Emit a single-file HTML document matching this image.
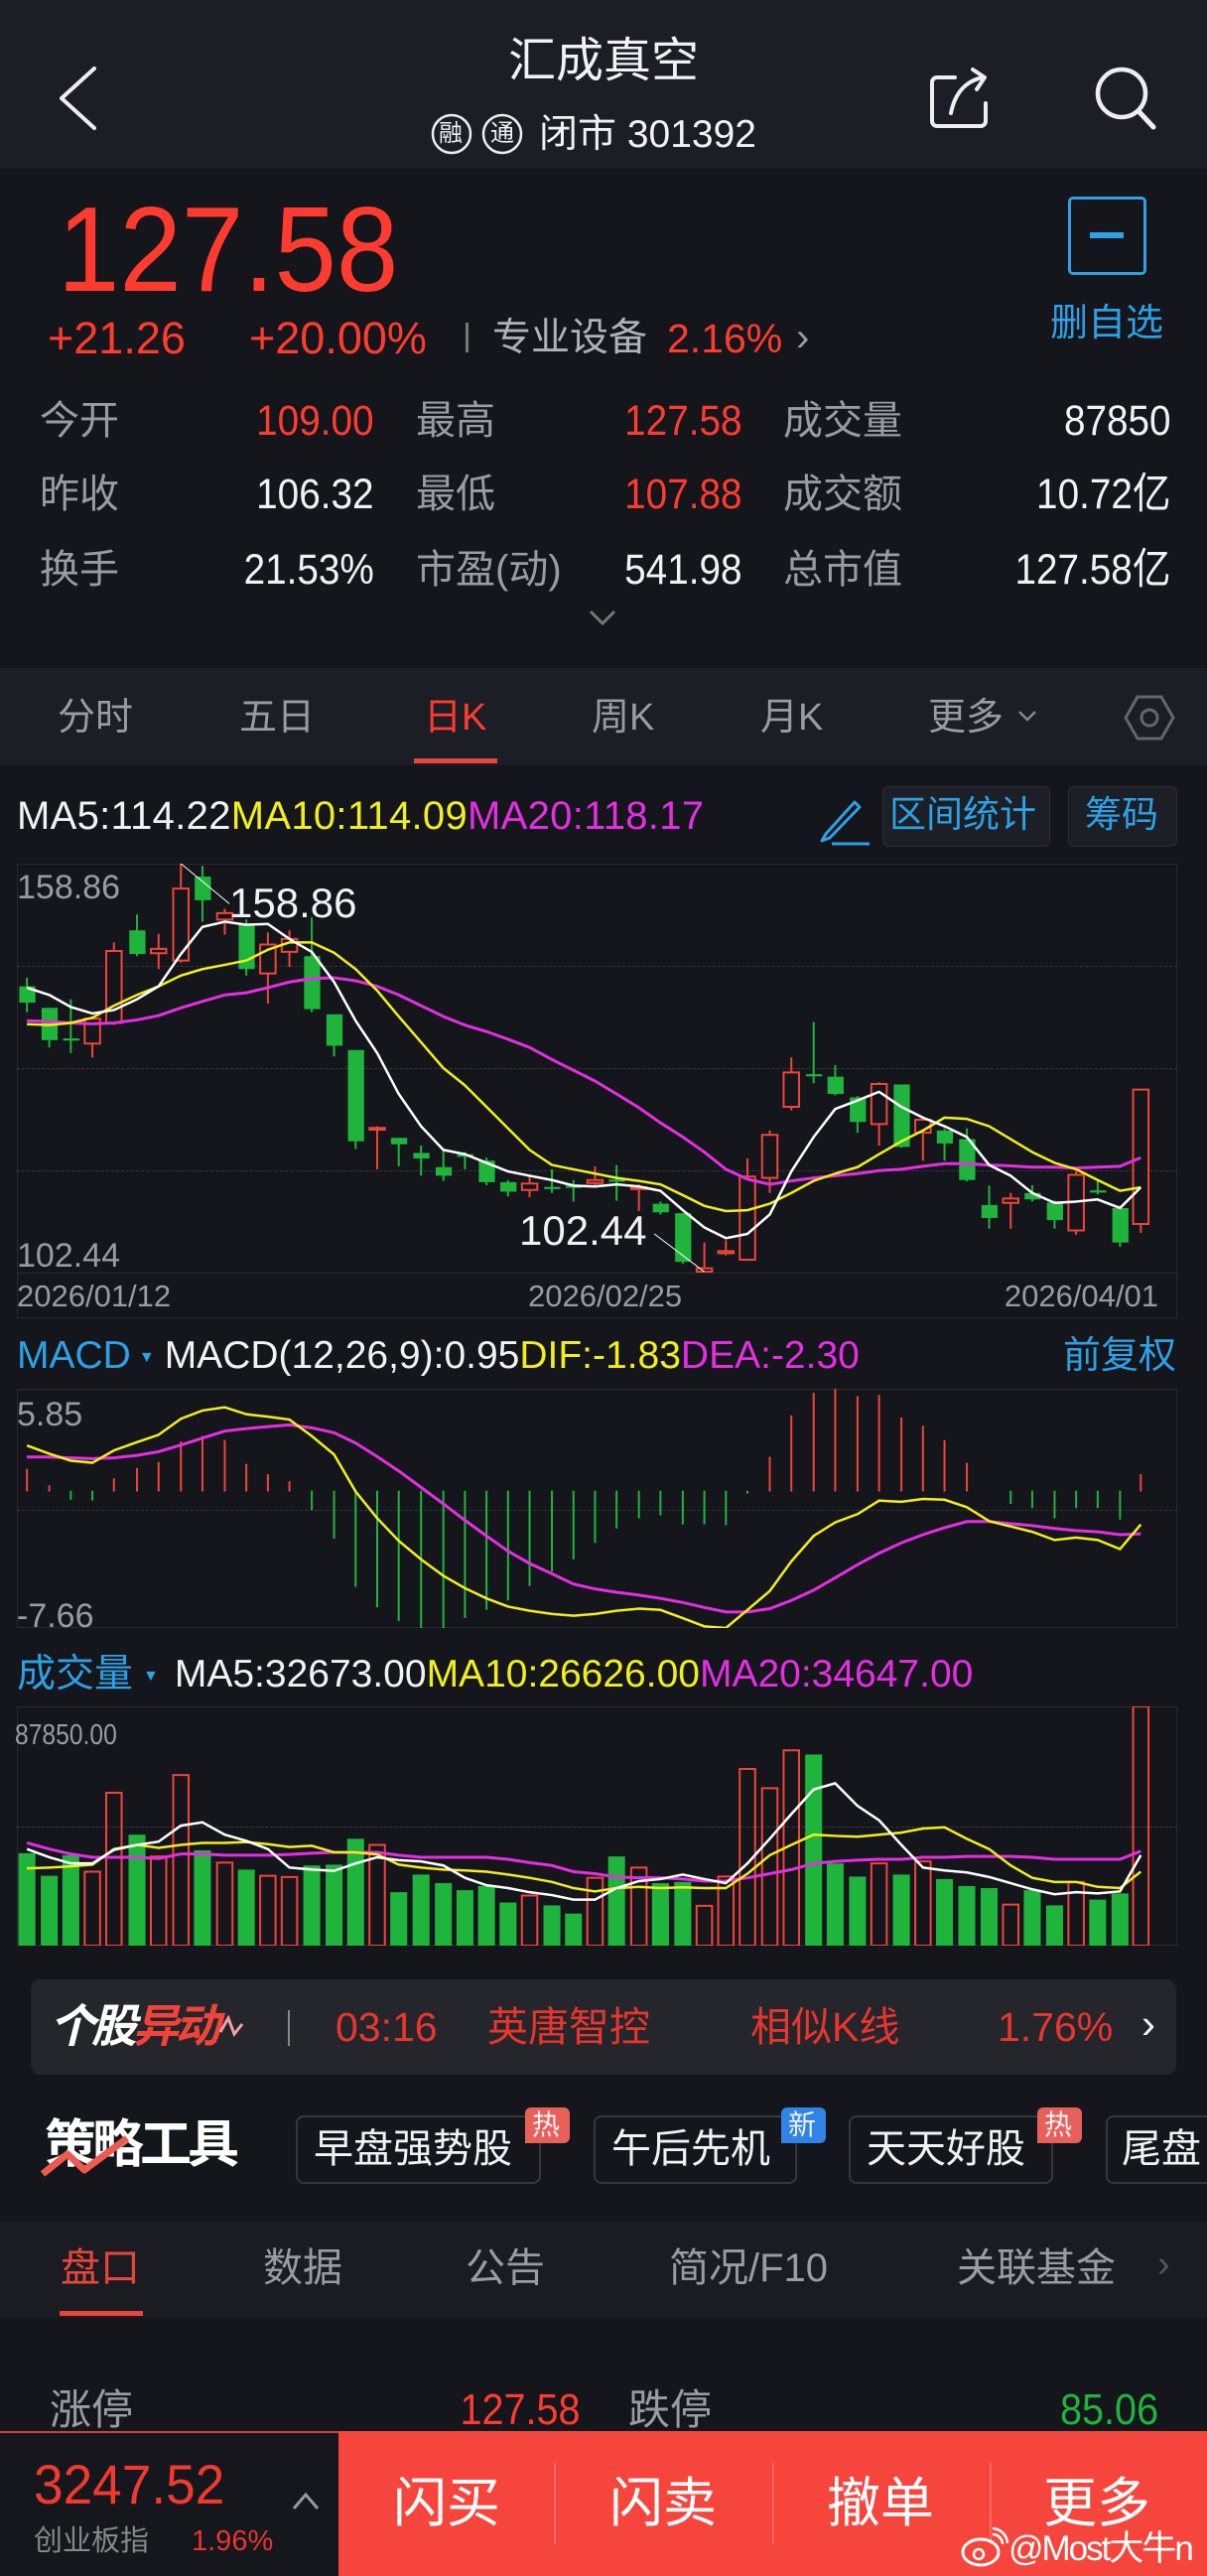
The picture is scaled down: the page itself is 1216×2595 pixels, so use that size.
<!DOCTYPE html>
<html><head><meta charset="utf-8">
<style>
*{margin:0;padding:0;box-sizing:border-box}
body{width:1216px;height:2595px;background:#14161b;position:relative;overflow:hidden;font-family:"Liberation Sans","Noto Sans CJK SC",sans-serif;color:#e8e8ea}
.t{position:absolute;white-space:nowrap;line-height:1.2}
.r{color:#ff3b30}.g{color:#1fb43c}.gy{color:#9a9ca3}.b{color:#2ea0e6}.w{color:#f2f2f4}.y{color:#f2ee1e}.m{color:#e52ee2}
.sx{display:inline-block;transform-origin:left center}
.sxr{display:inline-block;transform-origin:right center}
.rt{text-align:right}
svg{position:absolute}
</style></head><body>
<!-- header -->
<div style="position:absolute;left:0;top:0;width:1216px;height:170px;background:#1b1e25"></div>
<svg style="left:0;top:0" width="1216" height="170">
<polyline points="95,69 62,99 95,129" fill="none" stroke="#eee" stroke-width="4" stroke-linecap="round" stroke-linejoin="round"/>
<path d="M962,78 H944 a5,5 0 0 0 -5,5 V122 a5,5 0 0 0 5,5 H988 a5,5 0 0 0 5,-5 V104" fill="none" stroke="#eee" stroke-width="4" stroke-linecap="round"/>
<path d="M958,114 C962,94 972,82 990,78 M980,70 L992,78 L984,90" fill="none" stroke="#eee" stroke-width="4" stroke-linecap="round" stroke-linejoin="round"/>
<circle cx="1130" cy="94" r="24" fill="none" stroke="#eee" stroke-width="4.5"/>
<line x1="1147" y1="112" x2="1162" y2="128" stroke="#eee" stroke-width="5" stroke-linecap="round"/>
<circle cx="455" cy="135" r="19" fill="none" stroke="#eee" stroke-width="2.5"/>
<circle cx="506" cy="135" r="19" fill="none" stroke="#eee" stroke-width="2.5"/>
</svg>
<div class="t w" style="left:0;width:1216px;text-align:center;top:33px;font-size:48px">汇成真空</div>
<div class="t w" style="left:442px;top:121px;font-size:24px">融</div>
<div class="t w" style="left:494px;top:121px;font-size:24px">通</div>
<div class="t w" style="left:543px;top:113px;font-size:39px">闭市 301392</div>

<!-- price -->
<div class="t r" style="left:58px;top:190px;font-size:122px;line-height:1"><span class="sx" style="transform:scaleX(.92)">127.58</span></div>
<div class="t r" style="left:48px;top:318px;font-size:45px;line-height:1">+21.26</div>
<div class="t r" style="left:251px;top:318px;font-size:45px;line-height:1">+20.00%</div>
<div style="position:absolute;left:469px;top:325px;width:3px;height:30px;background:#777"></div>
<div class="t gy" style="left:496px;top:318px;font-size:39px;color:#b0b2b8">专业设备</div>
<div class="t r" style="left:672px;top:319px;font-size:41px;line-height:1.1">2.16%</div>
<div class="t gy" style="left:802px;top:316px;font-size:40px">›</div>
<div style="position:absolute;left:1076px;top:198px;width:79px;height:79px;border:3px solid #2ea0e6;border-radius:5px"></div>
<div style="position:absolute;left:1098px;top:234px;width:34px;height:6px;background:#2ea0e6"></div>
<div class="t b" style="left:1058px;top:304px;font-size:38px">删自选</div>

<!-- stats -->
<div class="t gy" style="left:40px;top:400px;font-size:40px">今开</div>
<div class="t gy" style="left:40px;top:474px;font-size:40px">昨收</div>
<div class="t gy" style="left:40px;top:550px;font-size:40px">换手</div>
<div class="t gy" style="left:419px;top:400px;font-size:40px">最高</div>
<div class="t gy" style="left:419px;top:474px;font-size:40px">最低</div>
<div class="t gy" style="left:419px;top:550px;font-size:40px">市盈(动)</div>
<div class="t gy" style="left:789px;top:400px;font-size:40px">成交量</div>
<div class="t gy" style="left:789px;top:474px;font-size:40px">成交额</div>
<div class="t gy" style="left:789px;top:550px;font-size:40px">总市值</div>
<div class="t r rt" style="right:839px;top:399px;font-size:43px"><span class="sxr" style="transform:scaleX(.9)">109.00</span></div>
<div class="t w rt" style="right:839px;top:473px;font-size:43px"><span class="sxr" style="transform:scaleX(.9)">106.32</span></div>
<div class="t w rt" style="right:839px;top:549px;font-size:43px"><span class="sxr" style="transform:scaleX(.9)">21.53%</span></div>
<div class="t r rt" style="right:468px;top:399px;font-size:43px"><span class="sxr" style="transform:scaleX(.9)">127.58</span></div>
<div class="t r rt" style="right:468px;top:473px;font-size:43px"><span class="sxr" style="transform:scaleX(.9)">107.88</span></div>
<div class="t w rt" style="right:468px;top:549px;font-size:43px"><span class="sxr" style="transform:scaleX(.9)">541.98</span></div>
<div class="t w rt" style="right:36px;top:399px;font-size:43px"><span class="sxr" style="transform:scaleX(.9)">87850</span></div>
<div class="t w rt" style="right:36px;top:473px;font-size:43px"><span class="sxr" style="transform:scaleX(.9)">10.72亿</span></div>
<div class="t w rt" style="right:36px;top:549px;font-size:43px"><span class="sxr" style="transform:scaleX(.9)">127.58亿</span></div>
<svg style="left:0;top:600px" width="1216" height="40"><polyline points="595,16 607,28 619,16" fill="none" stroke="#777" stroke-width="3"/></svg>

<!-- tabs -->
<div style="position:absolute;left:0;top:673px;width:1216px;height:98px;background:#1b1e24"></div>
<div class="t gy" style="left:58px;top:701px;font-size:38px">分时</div>
<div class="t gy" style="left:241px;top:701px;font-size:38px">五日</div>
<div class="t r" style="left:427px;top:701px;font-size:38px">日K</div>
<div class="t gy" style="left:596px;top:701px;font-size:38px">周K</div>
<div class="t gy" style="left:766px;top:701px;font-size:38px">月K</div>
<div class="t gy" style="left:935px;top:701px;font-size:38px">更多</div>
<div style="position:absolute;left:417px;top:764px;width:84px;height:5px;background:#e8453c"></div>
<svg style="left:0;top:673px" width="1216" height="98">
<polyline points="1027,44 1035,52 1043,44" fill="none" stroke="#888" stroke-width="2.5"/>
<polygon points="1146,29 1170,29 1182,50 1170,71 1146,71 1134,50" fill="none" stroke="#666" stroke-width="3"/>
<circle cx="1158" cy="50" r="8" fill="none" stroke="#666" stroke-width="3"/>
</svg>

<!-- MA row -->
<div class="t" style="left:17px;top:798px;font-size:40px;letter-spacing:0.3px"><span class="w">MA5:114.22</span><span class="y">MA10:114.09</span><span class="m">MA20:118.17</span></div>
<svg style="left:820px;top:795px" width="60" height="60"><path d="M12,45 L8,52 L16,49 L46,18 L41,13 Z" fill="none" stroke="#2ea0e6" stroke-width="3" stroke-linejoin="round"/><line x1="18" y1="55" x2="56" y2="55" stroke="#2ea0e6" stroke-width="3"/></svg>
<div style="position:absolute;left:889px;top:792px;width:169px;height:61px;background:#1c1f25;border:1px solid #2a2d33;border-radius:6px"></div>
<div class="t b" style="left:896px;top:799px;font-size:37px">区间统计</div>
<div style="position:absolute;left:1076px;top:792px;width:110px;height:61px;background:#1c1f25;border:1px solid #2a2d33;border-radius:6px"></div>
<div class="t b" style="left:1093px;top:799px;font-size:37px">筹码</div>

<!-- price chart -->
<div style="position:absolute;left:17px;top:870px;width:1169px;height:458px;border:1px solid #272a30"></div>
<div style="position:absolute;left:17px;top:973px;width:1169px;border-top:1px dashed #33363c"></div>
<div style="position:absolute;left:17px;top:1076px;width:1169px;border-top:1px dashed #33363c"></div>
<div style="position:absolute;left:17px;top:1179px;width:1169px;border-top:1px dashed #33363c"></div>
<div style="position:absolute;left:17px;top:1282px;width:1169px;border-top:1px solid #272a30"></div>
<svg style="left:0;top:870px" width="1216" height="412" viewBox="0 485 1568 950" preserveAspectRatio="none">
<g stroke="#1fb43c" stroke-width="2" vector-effect="non-scaling-stroke">
<line x1="35" y1="750" x2="35" y2="830" vector-effect="non-scaling-stroke"/><line x1="64" y1="820" x2="64" y2="912" vector-effect="non-scaling-stroke"/><line x1="92" y1="800" x2="92" y2="925" vector-effect="non-scaling-stroke"/><line x1="178" y1="603" x2="178" y2="700" vector-effect="non-scaling-stroke"/><line x1="263" y1="490" x2="263" y2="620" vector-effect="non-scaling-stroke"/><line x1="320" y1="615" x2="320" y2="745" vector-effect="non-scaling-stroke"/><line x1="405" y1="610" x2="405" y2="830" vector-effect="non-scaling-stroke"/><line x1="434" y1="835" x2="434" y2="933" vector-effect="non-scaling-stroke"/><line x1="462" y1="918" x2="462" y2="1148" vector-effect="non-scaling-stroke"/><line x1="518" y1="1122" x2="518" y2="1188" vector-effect="non-scaling-stroke"/><line x1="547" y1="1140" x2="547" y2="1210" vector-effect="non-scaling-stroke"/><line x1="576" y1="1150" x2="576" y2="1222" vector-effect="non-scaling-stroke"/><line x1="604" y1="1155" x2="604" y2="1195" vector-effect="non-scaling-stroke"/><line x1="632" y1="1168" x2="632" y2="1232" vector-effect="non-scaling-stroke"/><line x1="660" y1="1220" x2="660" y2="1258" vector-effect="non-scaling-stroke"/><line x1="717" y1="1195" x2="717" y2="1250" vector-effect="non-scaling-stroke"/><line x1="745" y1="1220" x2="745" y2="1270" vector-effect="non-scaling-stroke"/><line x1="801" y1="1185" x2="801" y2="1268" vector-effect="non-scaling-stroke"/><line x1="858" y1="1270" x2="858" y2="1300" vector-effect="non-scaling-stroke"/><line x1="887" y1="1297" x2="887" y2="1415" vector-effect="non-scaling-stroke"/><line x1="1057" y1="853" x2="1057" y2="995" vector-effect="non-scaling-stroke"/><line x1="1085" y1="953" x2="1085" y2="1023" vector-effect="non-scaling-stroke"/><line x1="1114" y1="1025" x2="1114" y2="1110" vector-effect="non-scaling-stroke"/><line x1="1171" y1="998" x2="1171" y2="1145" vector-effect="non-scaling-stroke"/><line x1="1227" y1="1100" x2="1227" y2="1175" vector-effect="non-scaling-stroke"/><line x1="1256" y1="1100" x2="1256" y2="1223" vector-effect="non-scaling-stroke"/><line x1="1285" y1="1233" x2="1285" y2="1333" vector-effect="non-scaling-stroke"/><line x1="1341" y1="1232" x2="1341" y2="1270" vector-effect="non-scaling-stroke"/><line x1="1370" y1="1268" x2="1370" y2="1333" vector-effect="non-scaling-stroke"/><line x1="1426" y1="1220" x2="1426" y2="1253" vector-effect="non-scaling-stroke"/><line x1="1455" y1="1280" x2="1455" y2="1375" vector-effect="non-scaling-stroke"/>
</g>
<g fill="#1fb43c">
<rect x="25" y="770" width="21" height="38"/><rect x="54" y="820" width="21" height="75"/><rect x="82" y="891" width="21" height="5"/><rect x="168" y="640" width="21" height="55"/><rect x="253" y="515" width="21" height="55"/><rect x="310" y="625" width="21" height="105"/><rect x="395" y="700" width="21" height="123"/><rect x="424" y="835" width="21" height="73"/><rect x="452" y="918" width="21" height="212"/><rect x="508" y="1122" width="21" height="15"/><rect x="537" y="1157" width="21" height="13"/><rect x="566" y="1190" width="21" height="20"/><rect x="594" y="1160" width="21" height="6"/><rect x="622" y="1175" width="21" height="50"/><rect x="650" y="1225" width="21" height="22"/><rect x="707" y="1236" width="21" height="5"/><rect x="735" y="1233" width="21" height="5"/><rect x="791" y="1219" width="21" height="5"/><rect x="848" y="1275" width="21" height="20"/><rect x="877" y="1297" width="21" height="113"/><rect x="1047" y="974" width="21" height="5"/><rect x="1075" y="980" width="21" height="40"/><rect x="1104" y="1028" width="21" height="57"/><rect x="1161" y="998" width="21" height="145"/><rect x="1217" y="1105" width="21" height="30"/><rect x="1246" y="1125" width="21" height="95"/><rect x="1275" y="1278" width="21" height="30"/><rect x="1331" y="1250" width="21" height="15"/><rect x="1360" y="1272" width="21" height="41"/><rect x="1416" y="1244" width="21" height="5"/><rect x="1445" y="1285" width="21" height="80"/>
</g>
<g stroke="#f0443b" stroke-width="2" fill="#14161b">
<line x1="120" y1="845" x2="120" y2="935" vector-effect="non-scaling-stroke"/><line x1="148" y1="668" x2="148" y2="860" vector-effect="non-scaling-stroke"/><line x1="206" y1="648" x2="206" y2="730" vector-effect="non-scaling-stroke"/><line x1="235" y1="485" x2="235" y2="715" vector-effect="non-scaling-stroke"/><line x1="292" y1="590" x2="292" y2="650" vector-effect="non-scaling-stroke"/><line x1="348" y1="645" x2="348" y2="810" vector-effect="non-scaling-stroke"/><line x1="376" y1="640" x2="376" y2="725" vector-effect="non-scaling-stroke"/><line x1="490" y1="1095" x2="490" y2="1195" vector-effect="non-scaling-stroke"/><line x1="688" y1="1208" x2="688" y2="1260" vector-effect="non-scaling-stroke"/><line x1="773" y1="1188" x2="773" y2="1235" vector-effect="non-scaling-stroke"/><line x1="830" y1="1230" x2="830" y2="1292" vector-effect="non-scaling-stroke"/><line x1="915" y1="1365" x2="915" y2="1435" vector-effect="non-scaling-stroke"/><line x1="943" y1="1360" x2="943" y2="1395" vector-effect="non-scaling-stroke"/><line x1="971" y1="1170" x2="971" y2="1408" vector-effect="non-scaling-stroke"/><line x1="1000" y1="1105" x2="1000" y2="1250" vector-effect="non-scaling-stroke"/><line x1="1028" y1="935" x2="1028" y2="1058" vector-effect="non-scaling-stroke"/><line x1="1142" y1="993" x2="1142" y2="1140" vector-effect="non-scaling-stroke"/><line x1="1199" y1="1072" x2="1199" y2="1175" vector-effect="non-scaling-stroke"/><line x1="1313" y1="1250" x2="1313" y2="1333" vector-effect="non-scaling-stroke"/><line x1="1398" y1="1200" x2="1398" y2="1347" vector-effect="non-scaling-stroke"/><line x1="1482" y1="1010" x2="1482" y2="1343" vector-effect="non-scaling-stroke"/>
<rect x="110" y="845" width="20" height="58" vector-effect="non-scaling-stroke"/><rect x="138" y="688" width="20" height="167" vector-effect="non-scaling-stroke"/><rect x="196" y="683" width="20" height="10" vector-effect="non-scaling-stroke"/><rect x="225" y="543" width="20" height="167" vector-effect="non-scaling-stroke"/><rect x="282" y="600" width="20" height="15" vector-effect="non-scaling-stroke"/><rect x="338" y="673" width="20" height="67" vector-effect="non-scaling-stroke"/><rect x="366" y="660" width="20" height="30" vector-effect="non-scaling-stroke"/><rect x="480" y="1099" width="20" height="4" vector-effect="non-scaling-stroke"/><rect x="678" y="1228" width="20" height="15" vector-effect="non-scaling-stroke"/><rect x="763" y="1220" width="20" height="7" vector-effect="non-scaling-stroke"/><rect x="820" y="1237" width="20" height="4" vector-effect="non-scaling-stroke"/><rect x="905" y="1425" width="20" height="8" vector-effect="non-scaling-stroke"/><rect x="933" y="1385" width="20" height="5" vector-effect="non-scaling-stroke"/><rect x="961" y="1212" width="20" height="193" vector-effect="non-scaling-stroke"/><rect x="990" y="1115" width="20" height="100" vector-effect="non-scaling-stroke"/><rect x="1018" y="970" width="20" height="80" vector-effect="non-scaling-stroke"/><rect x="1132" y="997" width="20" height="93" vector-effect="non-scaling-stroke"/><rect x="1189" y="1080" width="20" height="30" vector-effect="non-scaling-stroke"/><rect x="1303" y="1263" width="20" height="10" vector-effect="non-scaling-stroke"/><rect x="1388" y="1208" width="20" height="129" vector-effect="non-scaling-stroke"/><rect x="1472" y="1010" width="20" height="312" vector-effect="non-scaling-stroke"/>
</g>
<g fill="none" stroke-width="2.5" stroke-linejoin="round">
<polyline vector-effect="non-scaling-stroke" stroke="#e52ee2" stroke-width="3" points="35,850 64,852 92,855 120,857 148,855 178,848 206,838 235,820 263,805 292,790 320,785 348,773 376,760 405,752 434,750 462,757 490,770 518,790 547,815 576,840 604,860 632,875 660,893 688,912 717,940 745,965 773,990 801,1020 830,1052 858,1087 887,1120 915,1155 943,1195 971,1218 1000,1230 1028,1222 1057,1215 1085,1210 1114,1205 1142,1198 1171,1195 1199,1188 1227,1182 1256,1182 1285,1185 1313,1187 1341,1190 1370,1190 1398,1192 1426,1190 1455,1188 1482,1168"/>
<polyline vector-effect="non-scaling-stroke" stroke="#f2ee1e" points="35,858 64,860 92,855 120,843 148,815 178,790 206,770 235,745 263,730 292,720 320,710 348,685 376,668 405,668 434,692 462,730 490,780 518,840 547,900 576,960 604,1000 632,1050 660,1100 688,1150 717,1185 745,1195 773,1205 801,1215 830,1222 858,1230 887,1255 915,1280 943,1292 971,1290 1000,1275 1028,1250 1057,1222 1085,1205 1114,1190 1142,1160 1171,1130 1199,1105 1227,1075 1256,1078 1285,1095 1313,1125 1341,1155 1370,1180 1398,1195 1426,1220 1455,1245 1482,1237"/>
<polyline vector-effect="non-scaling-stroke" stroke="#ffffff" points="35,773 64,790 92,818 120,833 148,825 178,800 206,770 235,695 263,632 292,620 320,627 348,625 376,660 405,690 434,760 462,850 490,925 518,1020 547,1095 576,1150 604,1160 632,1180 660,1200 688,1210 717,1220 745,1233 773,1235 801,1230 830,1235 858,1245 887,1290 915,1330 943,1355 971,1345 1000,1300 1028,1200 1057,1120 1085,1055 1114,1035 1142,1015 1171,1050 1199,1075 1227,1095 1256,1120 1285,1185 1313,1210 1341,1250 1370,1273 1398,1270 1426,1265 1455,1285 1482,1237"/>
<line x1="235" y1="485" x2="298" y2="578" stroke="#fff" stroke-width="1" vector-effect="non-scaling-stroke"/>
<line x1="850" y1="1345" x2="915" y2="1433" stroke="#fff" stroke-width="1" vector-effect="non-scaling-stroke"/>
</g>
</svg>
<div class="t gy" style="left:17px;top:874px;font-size:34px">158.86</div>
<div class="t w" style="left:231px;top:885px;font-size:42px">158.86</div>
<div class="t w" style="left:523px;top:1215px;font-size:42px">102.44</div>
<div class="t gy" style="left:17px;top:1245px;font-size:34px">102.44</div>
<div class="t gy" style="left:17px;top:1287px;font-size:31px">2026/01/12</div>
<div class="t gy" style="left:532px;top:1287px;font-size:31px">2026/02/25</div>
<div class="t gy rt" style="right:49px;top:1287px;font-size:31px">2026/04/01</div>

<!-- MACD -->
<div class="t" style="left:17px;top:1343px;font-size:39px"><span class="b">MACD</span><span class="b" style="font-size:16px;vertical-align:middle;margin:0 10px 0 8px">▼</span><span class="w">MACD(12,26,9):0.95</span><span class="y">DIF:-1.83</span><span class="m">DEA:-2.30</span></div>
<div class="t b" style="left:1071px;top:1344px;font-size:38px">前复权</div>
<div style="position:absolute;left:17px;top:1399px;width:1169px;height:241px;border:1px solid #272a30"></div>
<div style="position:absolute;left:17px;top:1521px;width:1169px;border-top:1px dashed #33363c"></div>
<svg style="left:0;top:1399px" width="1216" height="241" viewBox="0 190 1568 582" preserveAspectRatio="none">
<path vector-effect="non-scaling-stroke" stroke="#f0443b" stroke-width="2" d="M35,440V385M64,440V425M148,440V408M178,440V383M206,440V368M235,440V318M263,440V305M292,440V315M320,440V373M348,440V398M376,440V415M1000,440V355M1028,440V255M1057,440V200M1085,440V188M1114,440V208M1142,440V205M1171,440V260M1199,440V280M1227,440V315M1256,440V370M1482,440V398"/>
<path vector-effect="non-scaling-stroke" stroke="#1fb43c" stroke-width="2" d="M92,438V460M120,438V462M405,438V485M434,438V555M462,438V672M490,438V722M518,438V755M547,438V772M576,438V775M604,438V748M632,438V728M660,438V705M688,438V670M717,438V635M745,438V605M773,438V565M801,438V530M830,438V505M858,438V498M887,438V520M915,438V520M943,438V522M971,438V445M1313,438V470M1341,438V480M1370,438V505M1398,438V480M1426,438V480M1455,438V508"/>
<polyline vector-effect="non-scaling-stroke" fill="none" stroke="#e52ee2" stroke-width="3" points="35,356 64,356 92,358 120,360 148,358 178,352 206,343 235,327 263,310 292,293 320,287 348,282 376,278 405,285 434,297 462,322 490,355 518,390 547,430 576,470 604,510 632,548 660,585 688,615 717,640 745,665 773,677 801,685 830,692 858,700 887,710 915,722 943,733 971,733 1000,725 1028,705 1057,680 1085,650 1114,618 1142,590 1171,565 1199,545 1227,528 1256,513 1285,513 1313,518 1341,523 1370,530 1398,535 1426,538 1455,545 1482,543"/>
<polyline vector-effect="non-scaling-stroke" fill="none" stroke="#f2ee1e" stroke-width="2.5" points="35,328 64,348 92,365 120,370 148,340 178,320 206,302 235,263 263,243 292,235 320,252 348,258 376,265 405,305 434,350 462,440 490,505 518,560 547,605 576,645 604,675 632,700 660,720 688,730 717,738 745,742 773,738 801,730 830,725 858,728 887,748 915,768 943,772 971,728 1000,682 1028,610 1057,548 1085,515 1114,495 1142,462 1171,465 1199,458 1227,460 1256,478 1285,512 1313,525 1341,538 1370,558 1398,552 1426,558 1455,580 1482,520"/>
</svg>
<div class="t gy" style="left:17px;top:1405px;font-size:34px">5.85</div>
<div class="t gy" style="left:17px;top:1608px;font-size:34px">-7.66</div>

<!-- Volume -->
<div class="t" style="left:17px;top:1664px;font-size:39px"><span class="b">成交量</span><span class="b" style="font-size:16px;vertical-align:middle;margin:0 16px 0 10px">▼</span><span class="w">MA5:32673.00</span><span class="y">MA10:26626.00</span><span class="m">MA20:34647.00</span></div>
<div style="position:absolute;left:17px;top:1719px;width:1169px;height:241px;border:1px solid #272a30"></div>
<div style="position:absolute;left:17px;top:1840px;width:1169px;border-top:1px dashed #33363c"></div>
<svg style="left:0;top:1719px" width="1216" height="241" viewBox="0 963 1568 582" preserveAspectRatio="none">
<g fill="#1fb43c">
<rect x="24" y="1320" width="22" height="225"/><rect x="53" y="1375" width="22" height="170"/><rect x="81" y="1325" width="22" height="220"/><rect x="167" y="1275" width="22" height="270"/><rect x="252" y="1313" width="22" height="232"/><rect x="309" y="1360" width="22" height="185"/><rect x="394" y="1350" width="22" height="195"/><rect x="423" y="1348" width="22" height="197"/><rect x="451" y="1285" width="22" height="260"/><rect x="507" y="1415" width="22" height="130"/><rect x="536" y="1372" width="22" height="173"/><rect x="565" y="1393" width="22" height="152"/><rect x="593" y="1410" width="22" height="135"/><rect x="621" y="1400" width="22" height="145"/><rect x="649" y="1440" width="22" height="105"/><rect x="706" y="1447" width="22" height="98"/><rect x="734" y="1467" width="22" height="78"/><rect x="790" y="1328" width="22" height="217"/><rect x="847" y="1393" width="22" height="152"/><rect x="876" y="1390" width="22" height="155"/><rect x="1046" y="1080" width="22" height="465"/><rect x="1074" y="1345" width="22" height="200"/><rect x="1103" y="1377" width="22" height="168"/><rect x="1160" y="1372" width="22" height="173"/><rect x="1216" y="1383" width="22" height="162"/><rect x="1245" y="1400" width="22" height="145"/><rect x="1274" y="1405" width="22" height="140"/><rect x="1330" y="1410" width="22" height="135"/><rect x="1359" y="1447" width="22" height="98"/><rect x="1415" y="1433" width="22" height="112"/><rect x="1444" y="1418" width="22" height="127"/>
</g>
<g fill="none" stroke="#f0443b" stroke-width="2">
<rect vector-effect="non-scaling-stroke" x="110" y="1365" width="20" height="180"/><rect vector-effect="non-scaling-stroke" x="138" y="1173" width="20" height="372"/><rect vector-effect="non-scaling-stroke" x="196" y="1328" width="20" height="217"/><rect vector-effect="non-scaling-stroke" x="225" y="1130" width="20" height="415"/><rect vector-effect="non-scaling-stroke" x="282" y="1343" width="20" height="202"/><rect vector-effect="non-scaling-stroke" x="338" y="1375" width="20" height="170"/><rect vector-effect="non-scaling-stroke" x="366" y="1378" width="20" height="167"/><rect vector-effect="non-scaling-stroke" x="480" y="1300" width="20" height="245"/><rect vector-effect="non-scaling-stroke" x="678" y="1423" width="20" height="122"/><rect vector-effect="non-scaling-stroke" x="763" y="1380" width="20" height="165"/><rect vector-effect="non-scaling-stroke" x="820" y="1355" width="20" height="190"/><rect vector-effect="non-scaling-stroke" x="905" y="1448" width="20" height="97"/><rect vector-effect="non-scaling-stroke" x="933" y="1377" width="20" height="168"/><rect vector-effect="non-scaling-stroke" x="961" y="1115" width="20" height="430"/><rect vector-effect="non-scaling-stroke" x="990" y="1162" width="20" height="383"/><rect vector-effect="non-scaling-stroke" x="1018" y="1070" width="20" height="475"/><rect vector-effect="non-scaling-stroke" x="1132" y="1345" width="20" height="200"/><rect vector-effect="non-scaling-stroke" x="1189" y="1340" width="20" height="205"/><rect vector-effect="non-scaling-stroke" x="1303" y="1445" width="20" height="100"/><rect vector-effect="non-scaling-stroke" x="1388" y="1390" width="20" height="155"/><rect vector-effect="non-scaling-stroke" x="1472" y="963" width="20" height="582"/>
</g>
<polyline vector-effect="non-scaling-stroke" fill="none" stroke="#e52ee2" stroke-width="3" points="35,1295 64,1310 92,1322 120,1330 148,1330 178,1330 206,1333 235,1322 263,1322 292,1325 320,1325 348,1325 376,1323 405,1320 434,1318 462,1318 490,1318 518,1325 547,1330 576,1330 604,1330 632,1330 660,1335 688,1343 717,1350 745,1365 773,1370 801,1378 830,1380 858,1380 887,1383 915,1388 943,1388 971,1380 1000,1370 1028,1360 1057,1345 1085,1340 1114,1337 1142,1335 1171,1335 1199,1330 1227,1330 1256,1328 1285,1328 1313,1328 1341,1330 1370,1335 1398,1335 1426,1335 1455,1335 1482,1315"/>
<polyline vector-effect="non-scaling-stroke" fill="none" stroke="#f2ee1e" stroke-width="2.5" points="35,1357 64,1355 92,1352 120,1348 148,1310 178,1300 206,1307 235,1300 263,1295 292,1295 320,1293 348,1298 376,1305 405,1302 434,1318 462,1318 490,1323 518,1348 547,1355 576,1360 604,1362 632,1365 660,1372 688,1380 717,1390 745,1405 773,1413 801,1405 830,1402 858,1405 887,1403 915,1405 943,1405 971,1370 1000,1325 1028,1300 1057,1275 1085,1278 1114,1280 1142,1275 1171,1270 1199,1260 1227,1257 1256,1285 1285,1310 1313,1350 1341,1380 1370,1390 1398,1390 1426,1402 1455,1405 1482,1365"/>
<polyline vector-effect="non-scaling-stroke" fill="none" stroke="#ffffff" stroke-width="2.5" points="35,1310 64,1330 92,1345 120,1345 148,1312 178,1300 206,1292 235,1253 263,1245 292,1275 320,1290 348,1310 376,1355 405,1360 434,1363 462,1345 490,1330 518,1337 547,1340 576,1350 604,1380 632,1398 660,1405 688,1415 717,1422 745,1433 773,1433 801,1405 830,1388 858,1383 887,1372 915,1383 943,1393 971,1345 1000,1285 1028,1225 1057,1165 1085,1150 1114,1205 1142,1240 1171,1300 1199,1355 1227,1362 1256,1367 1285,1378 1313,1393 1341,1408 1370,1420 1398,1415 1426,1418 1455,1413 1482,1325"/>
</svg>
<div class="t gy" style="left:15px;top:1731px;font-size:29px"><span class="sx" style="transform:scaleX(.85)">87850.00</span></div>

<!-- banner -->
<div style="position:absolute;left:31px;top:1994px;width:1154px;height:96px;background:#24262b;border-radius:10px"></div>
<div class="t" style="left:50px;top:2014px;font-size:46px;font-weight:bold;font-style:italic;letter-spacing:-4px"><span style="color:#fff">个股</span><span style="color:#f0443b">异动</span></div>
<svg style="left:220px;top:2025px" width="60" height="40"><polyline points="2,22 10,8 16,24 24,14" fill="none" stroke="#f3a0a0" stroke-width="3"/></svg>
<div style="position:absolute;left:290px;top:2025px;width:2px;height:36px;background:#888"></div>
<div class="t r" style="left:338px;top:2018px;font-size:41px;color:#e8352e">03:16</div>
<div class="t r" style="left:491px;top:2018px;font-size:41px;color:#e8352e">英唐智控</div>
<div class="t r" style="left:756px;top:2018px;font-size:41px;color:#e8352e">相似K线</div>
<div class="t r" style="left:1005px;top:2018px;font-size:41px;color:#e8352e">1.76%</div>
<div class="t w" style="left:1150px;top:2014px;font-size:42px">›</div>

<!-- strategy -->
<div class="t" style="left:45px;top:2130px;font-size:52px;font-weight:bold;color:#fff;letter-spacing:-4px">策略工具</div>
<svg style="left:40px;top:2140px" width="100" height="60"><polyline points="3,50 28,30 45,46 88,14" fill="none" stroke="#ec5a50" stroke-width="7" stroke-linejoin="round"/></svg>
<div style="position:absolute;left:298px;top:2131px;width:247px;height:69px;border:2px solid #34373d;border-radius:8px"></div>
<div class="t w" style="left:316px;top:2141px;font-size:40px">早盘强势股</div>
<div style="position:absolute;left:598px;top:2131px;width:205px;height:69px;border:2px solid #34373d;border-radius:8px"></div>
<div class="t w" style="left:616px;top:2141px;font-size:40px">午后先机</div>
<div style="position:absolute;left:855px;top:2131px;width:206px;height:69px;border:2px solid #34373d;border-radius:8px"></div>
<div class="t w" style="left:873px;top:2141px;font-size:40px">天天好股</div>
<div style="position:absolute;left:1114px;top:2131px;width:120px;height:69px;border:2px solid #34373d;border-radius:8px"></div>
<div class="t w" style="left:1130px;top:2141px;font-size:40px">尾盘</div>
<div style="position:absolute;left:529px;top:2123px;width:45px;height:36px;background:#e8605a;border-radius:6px 6px 6px 0"></div>
<div class="t w" style="left:536px;top:2124px;font-size:28px">热</div>
<div style="position:absolute;left:787px;top:2123px;width:45px;height:36px;background:#2f84e6;border-radius:6px 6px 6px 0"></div>
<div class="t w" style="left:794px;top:2124px;font-size:28px">新</div>
<div style="position:absolute;left:1045px;top:2123px;width:45px;height:36px;background:#e8605a;border-radius:6px 6px 6px 0"></div>
<div class="t w" style="left:1052px;top:2124px;font-size:28px">热</div>

<!-- tabs 2 -->
<div style="position:absolute;left:0;top:2238px;width:1216px;height:97px;background:#1a1c22"></div>
<div class="t r" style="left:61px;top:2261px;font-size:40px;color:#e8453c">盘口</div>
<div class="t gy" style="left:265px;top:2261px;font-size:40px">数据</div>
<div class="t gy" style="left:469px;top:2261px;font-size:40px">公告</div>
<div class="t gy" style="left:674px;top:2261px;font-size:40px">简况/F10</div>
<div class="t gy" style="left:964px;top:2261px;font-size:40px">关联基金</div>
<div class="t gy" style="left:1166px;top:2259px;font-size:38px;color:#555">›</div>
<div style="position:absolute;left:60px;top:2328px;width:84px;height:5px;background:#e8453c"></div>

<div class="t gy" style="left:50px;top:2403px;font-size:42px">涨停</div>
<div class="t r rt" style="right:631px;top:2402px;font-size:44px"><span class="sxr" style="transform:scaleX(.9)">127.58</span></div>
<div class="t gy" style="left:633px;top:2403px;font-size:42px">跌停</div>
<div class="t g rt" style="right:49px;top:2402px;font-size:44px"><span class="sxr" style="transform:scaleX(.9)">85.06</span></div>

<!-- bottom bar -->
<div style="position:absolute;left:0;top:2449px;width:341px;height:146px;background:#15171c;border-top:2px solid #c9433b"></div>
<div style="position:absolute;left:341px;top:2449px;width:875px;height:146px;background:#f6453d"></div>
<div class="t r" style="left:34px;top:2472px;font-size:56px;line-height:1.1;color:#f0392f"><span class="sx" style="transform:scaleX(.95)">3247.52</span></div>
<div class="t gy" style="left:34px;top:2543px;font-size:29px;color:#888">创业板指</div>
<div class="t r" style="left:193px;top:2543px;font-size:29px;color:#e8352e">1.96%</div>
<svg style="left:290px;top:2505px" width="40" height="30"><polyline points="6,22 18,8 30,22" fill="none" stroke="#999" stroke-width="3"/></svg>
<div style="position:absolute;left:558px;top:2481px;width:2px;height:82px;background:#f66a62"></div>
<div style="position:absolute;left:778px;top:2481px;width:2px;height:82px;background:#f66a62"></div>
<div style="position:absolute;left:997px;top:2481px;width:2px;height:82px;background:#f66a62"></div>
<div class="t w" style="left:396px;top:2490px;font-size:54px;color:#fff">闪买</div>
<div class="t w" style="left:614px;top:2490px;font-size:54px;color:#fff">闪卖</div>
<div class="t w" style="left:833px;top:2490px;font-size:54px;color:#fff">撤单</div>
<div class="t w" style="left:1051px;top:2490px;font-size:54px;color:#fff">更多</div>
<svg style="left:966px;top:2545px" width="50" height="44"><ellipse cx="22" cy="26" rx="18" ry="13" fill="none" stroke="#fff" stroke-width="3"/><circle cx="20" cy="28" r="5" fill="none" stroke="#fff" stroke-width="2.5"/><path d="M34,8 a10,10 0 0 1 10,10 M34,2 a16,16 0 0 1 15,15" fill="none" stroke="#fff" stroke-width="2.5"/></svg>
<div class="t w" style="left:1016px;top:2547px;font-size:35px;color:#fff;letter-spacing:-2px">@Most大牛n</div>
</body></html>
